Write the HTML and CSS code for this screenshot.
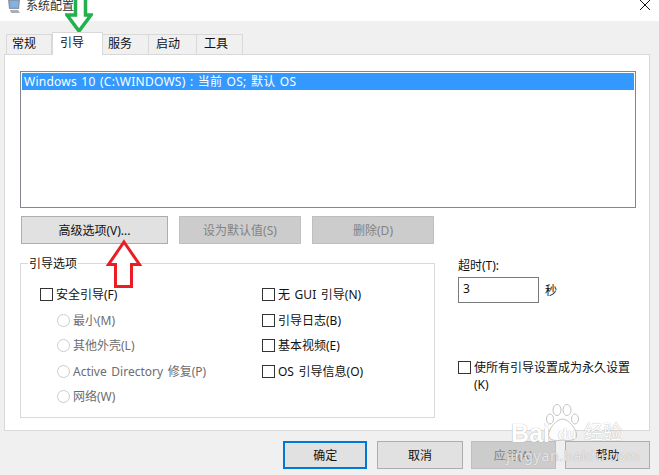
FILE: index.html
```html
<!DOCTYPE html>
<html lang="zh">
<head>
<meta charset="utf-8">
<title>系统配置</title>
<link rel="stylesheet" href="styles.css">
</head>
<body>
<div class="window">
  <header class="titlebar">
    <svg class="appicon" viewBox="0 0 14 13"><path d="M1 0H13L12 9H2Z" fill="#8d97a8"/><path d="M3 1H11.5L11 7.5H3.5Z" fill="#7fb2e5"/><path d="M3 10H11L13 13H4Z" fill="#a9adb5"/></svg>
    <span class="title">系统配置</span>
    <svg class="close" viewBox="0 0 10 10"><path d="M0 0L10 10M10 0L0 10" stroke="#111" stroke-width="1"/></svg>
  </header>
  <main class="content">
    <nav class="tabs">
      <span class="tab t1">常规</span>
      <span class="tab active">引导</span>
      <span class="tab t3">服务</span>
      <span class="tab t4">启动</span>
      <span class="tab t5">工具</span>
    </nav>
    <section class="panel">
      <div class="list"><div class="selected">Windows 10 (C:\WINDOWS) : 当前 OS; 默认 OS</div></div>
      <div class="actions">
        <button class="btn wide">高级选项(V)...</button>
        <button class="btn mid off">设为默认值(S)</button>
        <button class="btn mid off">删除(D)</button>
      </div>
      <div class="lower">
        <fieldset class="group">
          <legend>引导选项</legend>
          <div class="cols">
            <div class="col">
              <label class="row"><i class="box"></i>安全引导(F)</label>
              <label class="row sub dim"><i class="radio"></i>最小(M)</label>
              <label class="row sub dim"><i class="radio"></i>其他外壳(L)</label>
              <label class="row sub dim"><i class="radio"></i>Active Directory 修复(P)</label>
              <label class="row sub dim"><i class="radio"></i>网络(W)</label>
            </div>
            <div class="col">
              <label class="row"><i class="box"></i>无 GUI 引导(N)</label>
              <label class="row"><i class="box"></i>引导日志(B)</label>
              <label class="row"><i class="box"></i>基本视频(E)</label>
              <label class="row"><i class="box"></i>OS 引导信息(O)</label>
            </div>
          </div>
        </fieldset>
        <aside class="side">
          <div class="timeout-label">超时(T):</div>
          <div class="timeout"><span class="input">3</span><span>秒</span></div>
          <label class="permanent"><i class="box"></i><span>使所有引导设置成为永久设置 (K)</span></label>
        </aside>
      </div>
    </section>
    <footer class="footer">
      <button class="btn foot primary">确定</button>
      <button class="btn foot">取消</button>
      <button class="btn foot off">应用(A)</button>
      <button class="btn foot">帮助</button>
    </footer>
  </main>
  <svg class="arrow green" viewBox="0 0 28 34"><path d="M10.5 -2H20.5V15H26L14 31L2 15H10.5Z" fill="#fff" stroke="#22b14c" stroke-width="3.5"/></svg>
  <svg class="arrow red" viewBox="0 0 36 52"><path d="M18 4L33.5 26.5H25.5V48.5H9.5V26.5H2.5Z" fill="#fff" stroke="#ed1c24" stroke-width="3"/></svg>
  <div class="watermark" aria-hidden="true">
    <svg class="paw" viewBox="0 0 35 38"><g fill="#fff" fill-opacity=".85" stroke="#c4c4c4"><ellipse cx="5" cy="15" rx="3.5" ry="5"/><ellipse cx="12" cy="6" rx="4" ry="5.5"/><ellipse cx="22" cy="6" rx="4" ry="5.5"/><ellipse cx="30" cy="15" rx="3.5" ry="5"/><path d="M17.5 15c6 0 14 10 14 16 0 6-8 6-14 5-6 1-14 1-14-5 0-6 8-16 14-16z"/></g></svg>
    <span class="wm-brand">Bai</span><span class="wm-du">du</span><span class="wm-jy">经验</span>
    <span class="wm-url">jingyan.baidu.com</span>
  </div>
</div>
</body>
</html>
```

FILE: styles.css
```css
* { box-sizing: border-box; }
html, body { margin: 0; padding: 0; }
body { font: 12px/17px "Noto Sans", "Noto Sans CJK SC", sans-serif; color: #111; }
.window { position: relative; width: 659px; height: 475px; overflow: hidden; background: #f0f0f0; }
.titlebar { height: 21px; background: #fff; display: flex; align-items: flex-start; padding-left: 7px; }
.appicon { width: 14px; height: 13px; margin-right: 5px; }
.title { line-height: 12px; color: #333; }
.close { width: 10px; height: 10px; margin-left: auto; margin-right: 9px; }
.content { padding: 10px 9px 0 4px; }
.tabs { display: flex; height: 23px; align-items: flex-end; padding-left: 2px; }
.tab { height: 20px; width: 46px; background: #f0f0f0; border: 1px solid #d9d9d9; border-bottom: 0; border-left: 0; padding-left: 5px; line-height: 18px; }
.t1 { border-left: 1px solid #d9d9d9; }
.tab.active { height: 23px; width: 51px; background: #fff; border-left: 1px solid #d9d9d9; padding-left: 7px; position: relative; top: 1px; z-index: 1; line-height: 20px; }
.t4 { width: 48px; padding-left: 7px; }
.t5 { padding-left: 7px; }
.panel { height: 377px; background: #fff; border: 1px solid #d9d9d9; padding: 16px 13px 0 15px; }
.list { height: 137px; border: 1px solid #828790; padding: 1px; }
.selected { height: 17px; background: #3399ff; color: #fff; padding-left: 2px; line-height: 17px; letter-spacing: .25px; word-spacing: 1px; }
.actions { display: flex; gap: 11px; margin: 8px 0 0 1px; }
.btn { font: inherit; color: #111; height: 28px; border: 1px solid #adadad; background: #e1e1e1; padding: 0; }
.wide { width: 147px; }
.mid { width: 122px; }
.btn.off { background: #cccccc; border-color: #bfbfbf; color: #838383; }
.lower { display: flex; margin-top: 11px; }
.group { flex: none; width: 415px; min-width: 0; height: 163px; margin: 0; padding: 0; border: 1px solid #d9d9d9; }
.group legend { padding: 0 1px; margin-left: 7px; line-height: 17px; }
.cols { display: flex; padding: 14px 0 0 19px; }
.col { width: 222px; display: flex; flex-direction: column; gap: 8.5px; }
.col + .col { width: 170px; }
.row { display: flex; align-items: center; height: 17px; white-space: nowrap; word-spacing: 1.5px; }
.sub { padding-left: 17px; }
.dim { color: #6d6d6d; }
.box { flex: none; width: 13px; height: 13px; border: 1px solid #333; background: #fff; margin-right: 3px; }
.radio { flex: none; width: 13px; height: 13px; border: 1px solid #ccc; border-radius: 50%; background: #fff; margin-right: 3px; }
.side { flex: 1; min-width: 0; padding: 2px 0 0 23px; display: flex; flex-direction: column; }
.timeout-label { line-height: 17px; height: 17px; }
.timeout { display: flex; align-items: center; gap: 6px; margin-top: 3px; }
.input { width: 81px; height: 26px; border: 1px solid #7a7a7a; background: #fff; padding-left: 4px; line-height: 21px; }
.permanent { display: flex; align-items: flex-start; margin-top: 56px; white-space: normal; }
.permanent .box { margin-top: 2px; }
.footer { display: flex; gap: 9px; padding: 10px 0 0 279px; }
.foot { width: 86px; height: 28px; }
.primary { width: 85px; margin-right: 1px; border: 2px solid #0078d7; }
.foot.off { margin-left: -1px; }
.arrow { position: absolute; }
.green { left: 65px; top: 0; width: 28px; height: 34px; }
.red { left: 106px; top: 238px; width: 36px; height: 52px; }
.watermark { position: absolute; left: 505px; top: 405px; width: 154px; height: 70px; color: #fff; pointer-events: none; }
.paw { position: absolute; left: 40px; top: -1px; width: 35px; height: 38px; }
.wm-brand { position: absolute; left: 6px; top: 14px; font: bold 25px/28px "Liberation Sans", sans-serif; text-shadow: 0 0 1px #999; }
.wm-du { position: absolute; left: 53px; top: 20px; font: bold 15px/17px "Liberation Sans", sans-serif; text-shadow: 0 0 1px #999; }
.wm-jy { position: absolute; left: 79px; top: 13px; font-size: 19px; line-height: 28px; text-shadow: 0 0 1px #999; }
.wm-url { position: absolute; left: 1px; top: 41px; font-size: 14.5px; line-height: 18px; letter-spacing: .5px; color: rgba(255,255,255,.75); text-shadow: 0 0 1px #999; }
```
